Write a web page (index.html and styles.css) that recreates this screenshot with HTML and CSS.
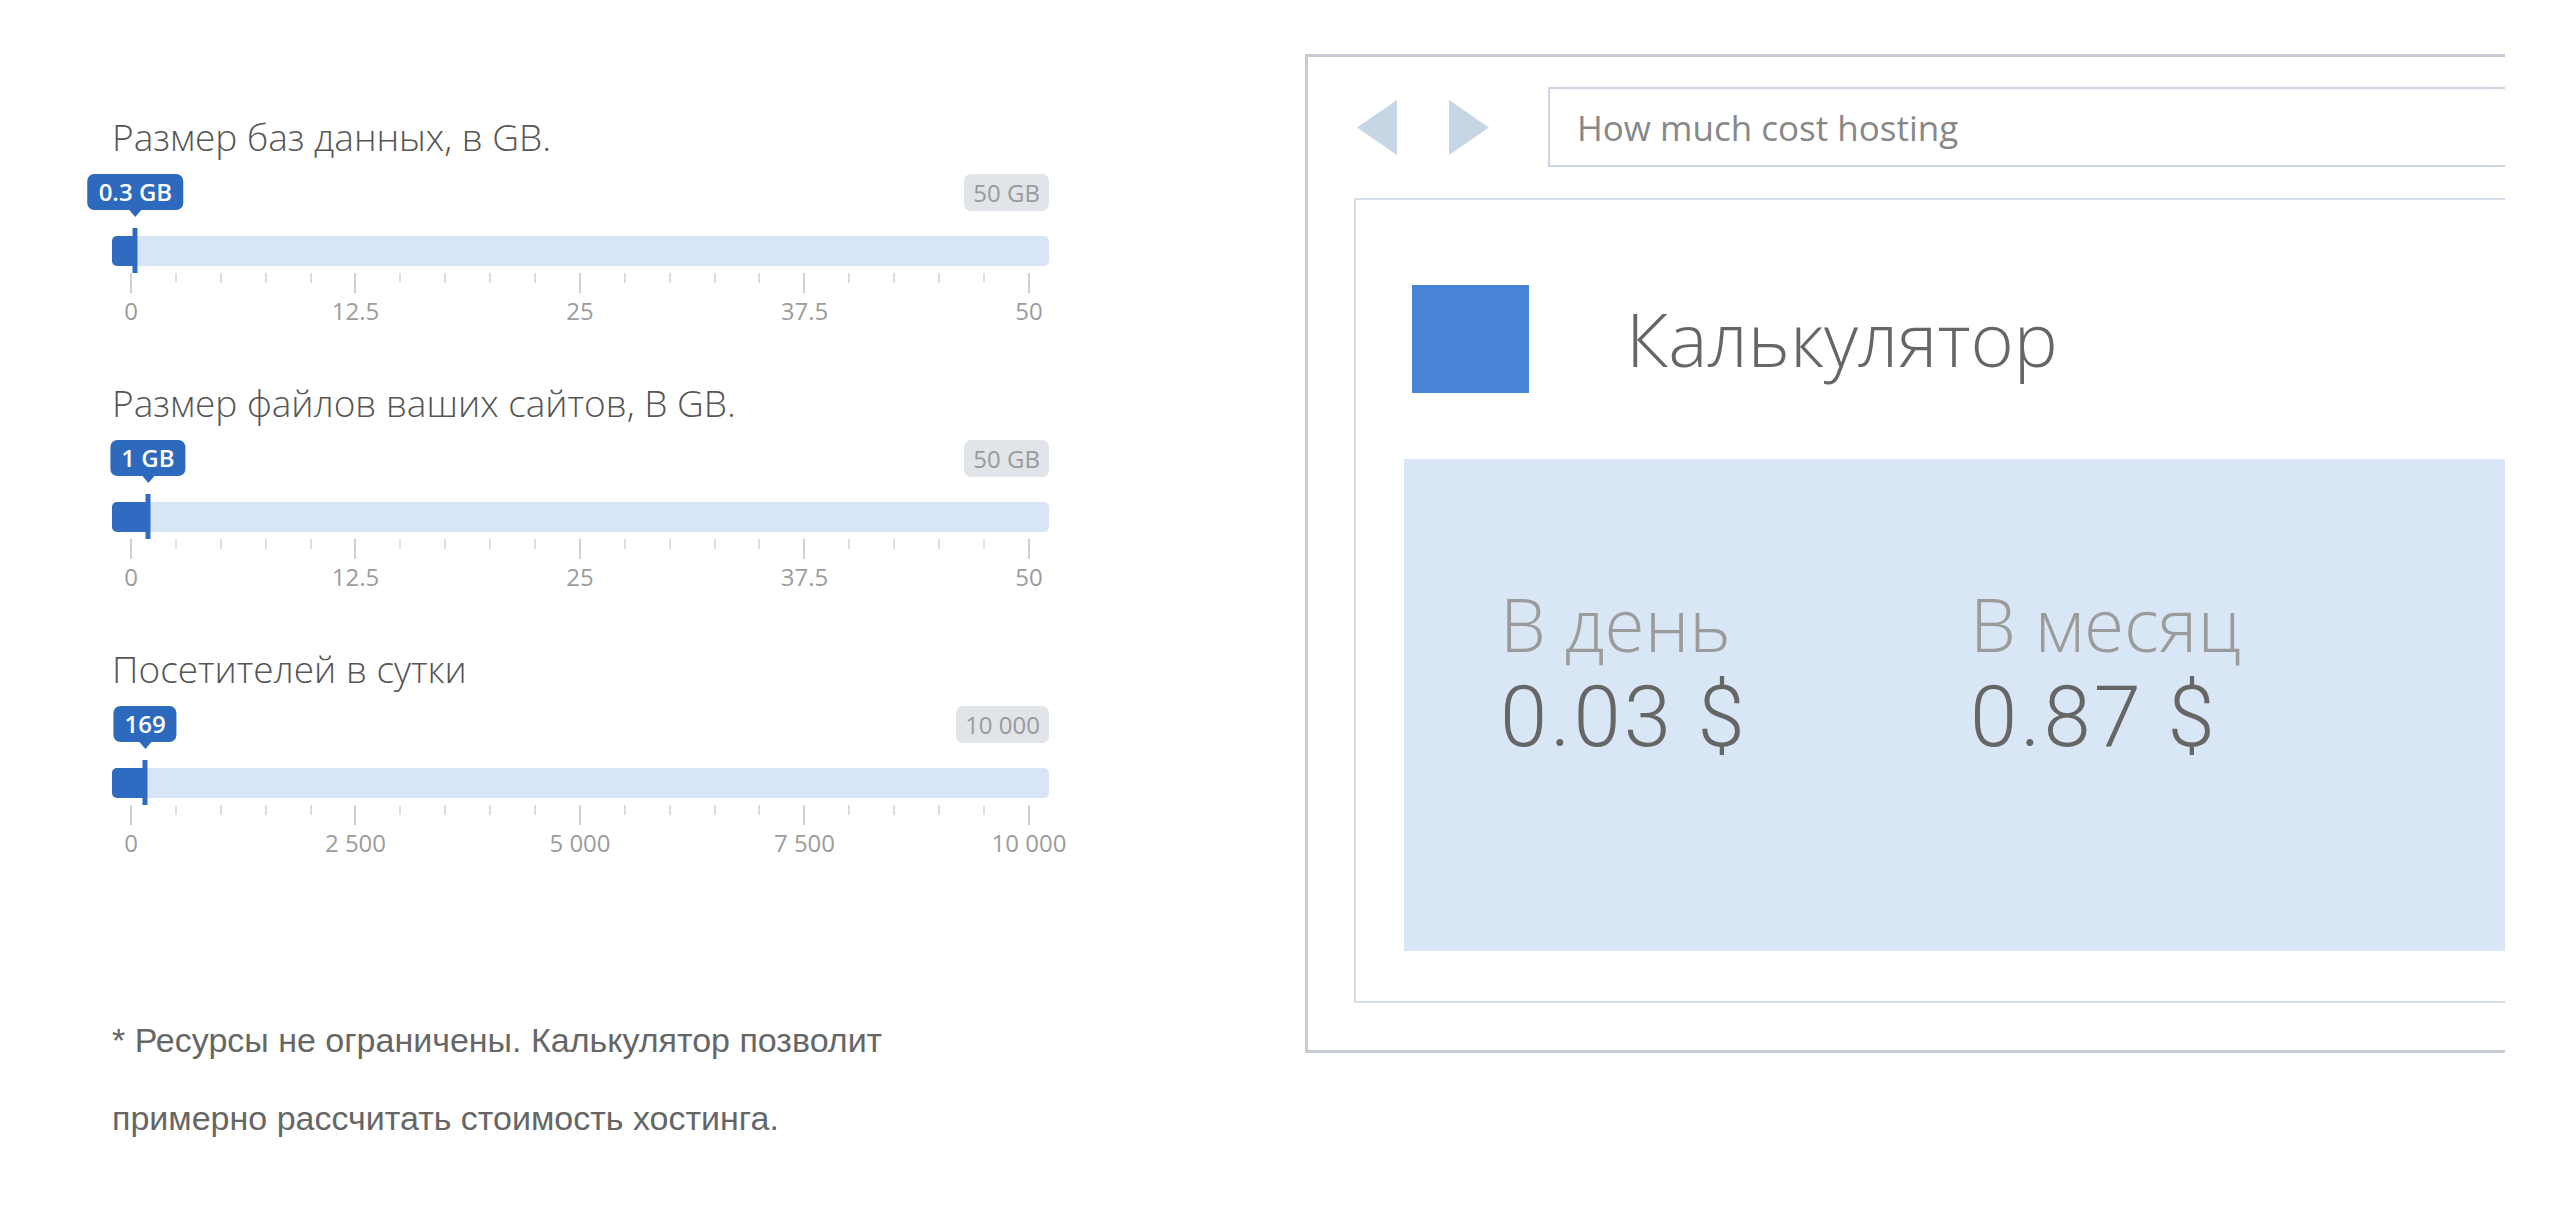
FILE: index.html
```html
<!DOCTYPE html>
<html lang="ru">
<head>
<meta charset="utf-8">
<title>Калькулятор хостинга</title>
<link rel="stylesheet" href="styles.css">
</head>
<body>
<div class="page">
  <section class="controls">
    <div class="field">
      <div class="field-label">Размер баз данных, в GB.</div>
      <div class="slider" style="--v:0.006">
        <div class="slider-top"><span class="max">50 GB</span></div>
        <div class="track">
          <div class="fill"></div>
          <div class="handle"></div>
          <div class="bubble">0.3 GB</div>
        </div>
        <div class="grid">
          <div class="ticks">
            <i class="major"></i><i></i><i></i><i></i><i></i><i class="major"></i><i></i><i></i><i></i><i></i><i class="major"></i><i></i><i></i><i></i><i></i><i class="major"></i><i></i><i></i><i></i><i></i><i class="major"></i>
          </div>
          <div class="nums"><span>0</span><span>12.5</span><span>25</span><span>37.5</span><span>50</span></div>
        </div>
      </div>
    </div>

    <div class="field">
      <div class="field-label">Размер файлов ваших сайтов, В GB.</div>
      <div class="slider" style="--v:0.02">
        <div class="slider-top"><span class="max">50 GB</span></div>
        <div class="track">
          <div class="fill"></div>
          <div class="handle"></div>
          <div class="bubble">1 GB</div>
        </div>
        <div class="grid">
          <div class="ticks">
            <i class="major"></i><i></i><i></i><i></i><i></i><i class="major"></i><i></i><i></i><i></i><i></i><i class="major"></i><i></i><i></i><i></i><i></i><i class="major"></i><i></i><i></i><i></i><i></i><i class="major"></i>
          </div>
          <div class="nums"><span>0</span><span>12.5</span><span>25</span><span>37.5</span><span>50</span></div>
        </div>
      </div>
    </div>

    <div class="field">
      <div class="field-label">Посетителей в сутки</div>
      <div class="slider" style="--v:0.0169">
        <div class="slider-top"><span class="max">10 000</span></div>
        <div class="track">
          <div class="fill"></div>
          <div class="handle"></div>
          <div class="bubble">169</div>
        </div>
        <div class="grid">
          <div class="ticks">
            <i class="major"></i><i></i><i></i><i></i><i></i><i class="major"></i><i></i><i></i><i></i><i></i><i class="major"></i><i></i><i></i><i></i><i></i><i class="major"></i><i></i><i></i><i></i><i></i><i class="major"></i>
          </div>
          <div class="nums"><span>0</span><span>2 500</span><span>5 000</span><span>7 500</span><span>10 000</span></div>
        </div>
      </div>
    </div>

    <p class="note">* Ресурсы не ограничены. Калькулятор позволит<br>примерно рассчитать стоимость хостинга.</p>
  </section>

  <section class="mock">
    <div class="frame">
      <div class="addr-row">
        <svg class="arrow" width="40" height="55" viewBox="0 0 40 55"><polygon points="40,0 0,27.5 40,55" fill="#c6d6e5"/></svg>
        <svg class="arrow arrow-right" width="40" height="55" viewBox="0 0 40 55"><polygon points="0,0 40,27.5 0,55" fill="#c6d6e5"/></svg>
        <div class="addr">How much cost hosting</div>
      </div>
      <div class="window">
        <div class="win-head">
          <div class="logo"></div>
          <h1 class="title">Калькулятор</h1>
        </div>
        <div class="result">
          <div class="col">
            <div class="period">В день</div>
            <div class="price">0.03 $</div>
          </div>
          <div class="col">
            <div class="period">В месяц</div>
            <div class="price">0.87 $</div>
          </div>
        </div>
      </div>
    </div>
  </section>
</div>
</body>
</html>
```

FILE: styles.css
```css
* { box-sizing: border-box; }

html, body {
  margin: 0;
  padding: 0;
  background: #ffffff;
}

body {
  font-family: "Open Sans", "DejaVu Sans", sans-serif;
  width: 2560px;
  height: 1222px;
  overflow: hidden;
}

.page {
  display: flex;
  align-items: flex-start;
}

/* ---------- left column ---------- */
.controls {
  width: 937px;
  margin-left: 112px;
  padding-top: 115px;
}

.field {
  margin-bottom: 58px;
}

.field-label {
  font-size: 37px;
  font-weight: 300;
  line-height: 44px;
  height: 44px;
  color: #555555;
  white-space: nowrap;
}

.slider {
  margin-top: 15px;
}

.slider-top {
  height: 62px;
  display: flex;
  justify-content: flex-end;
  align-items: flex-start;
}

.max {
  height: 37px;
  line-height: 37px;
  padding: 0 9px;
  border-radius: 7px;
  background: #e1e4e9;
  color: #9a9a9a;
  font-size: 24px;
  white-space: nowrap;
}

.track {
  position: relative;
  height: 30px;
  border-radius: 5px;
  background: #d8e5f6;
}

.fill {
  height: 30px;
  width: calc(18px + 899px * var(--v));
  background: #2f6cc1;
  border-radius: 5px 0 0 5px;
}

.handle {
  position: absolute;
  top: -8px;
  left: calc(18px + 899px * var(--v));
  width: 5px;
  height: 45px;
  transform: translateX(-50%);
  background: #2f6cc1;
}

.bubble {
  position: absolute;
  top: -62px;
  left: calc(18px + 899px * var(--v));
  transform: translateX(-50%);
  height: 36px;
  line-height: 36px;
  padding: 0 11px;
  border-radius: 7px;
  background: #2d6abd;
  color: #ffffff;
  font-size: 24px;
  font-weight: 600;
  white-space: nowrap;
}

.bubble::after {
  content: "";
  position: absolute;
  left: 50%;
  bottom: -7px;
  margin-left: -6px;
  border-left: 6px solid transparent;
  border-right: 6px solid transparent;
  border-top: 7px solid #2d6abd;
}

.grid {
  margin: 7px 19px 0 18px;
}

.ticks {
  height: 20px;
  display: flex;
  justify-content: space-between;
  align-items: flex-start;
}

.ticks i {
  display: block;
  width: 2px;
  height: 10px;
  background: #dedede;
}

.ticks i.major {
  height: 20px;
  background: #d2d2d2;
}

.nums {
  margin-top: 6px;
  display: flex;
  justify-content: space-between;
  font-size: 24px;
  line-height: 24px;
  color: #9c9c9c;
}

.nums span {
  width: 2px;
  display: flex;
  justify-content: center;
  white-space: nowrap;
}

.note {
  margin: 146px 0 0 0;
  font-family: "Liberation Sans", Arial, sans-serif;
  font-size: 34px;
  line-height: 78px;
  color: #666666;
  white-space: nowrap;
}

/* ---------- right column: browser mock ---------- */
.mock {
  margin-left: 256px;
  margin-top: 54px;
  width: 1200px;
  overflow: hidden;
}

.frame {
  border-top: 3px solid #c6cbd6;
  border-left: 3px solid #c6cbd6;
  border-bottom: 3px solid #c6cbd6;
  padding: 30px 0 47px 46px;
}

.addr-row {
  display: flex;
  align-items: center;
  height: 80px;
  padding-left: 3px;
}

.arrow { display: block; flex: none; }
.arrow-right { margin-left: 52px; }

.addr {
  flex: 1;
  margin-left: 59px;
  height: 80px;
  border-top: 2px solid #ccd5e0;
  border-left: 2px solid #ccd5e0;
  border-bottom: 2px solid #ccd5e0;
  padding-left: 27px;
  display: flex;
  align-items: center;
  font-size: 35px;
  color: #888888;
  white-space: nowrap;
}

.window {
  margin-top: 31px;
  border-top: 2px solid #d4dce7;
  border-left: 2px solid #d4dce7;
  border-bottom: 2px solid #d4dce7;
  padding: 85px 0 50px 0;
}

.win-head {
  display: flex;
  align-items: center;
  padding-left: 56px;
}

.logo {
  width: 117px;
  height: 108px;
  background: #4884d6;
  flex: none;
}

.title {
  margin: 0 0 0 97px;
  font-size: 74px;
  font-weight: 300;
  line-height: 108px;
  color: #666666;
  white-space: nowrap;
}

.result {
  margin: 66px 0 0 48px;
  height: 492px;
  background: #d9e6f5;
  padding: 129px 0 0 96px;
  display: flex;
}

.col {
  width: 470px;
  flex: none;
}

.period {
  font-size: 73px;
  font-weight: 300;
  line-height: 71px;
  color: #9b9b9b;
  white-space: nowrap;
}

.price {
  margin-top: 16px;
  font-family: "Roboto", "Liberation Sans", sans-serif;
  font-weight: 300;
  font-size: 85px;
  line-height: 85px;
  letter-spacing: 3px;
  color: #666666;
  white-space: nowrap;
}
```
